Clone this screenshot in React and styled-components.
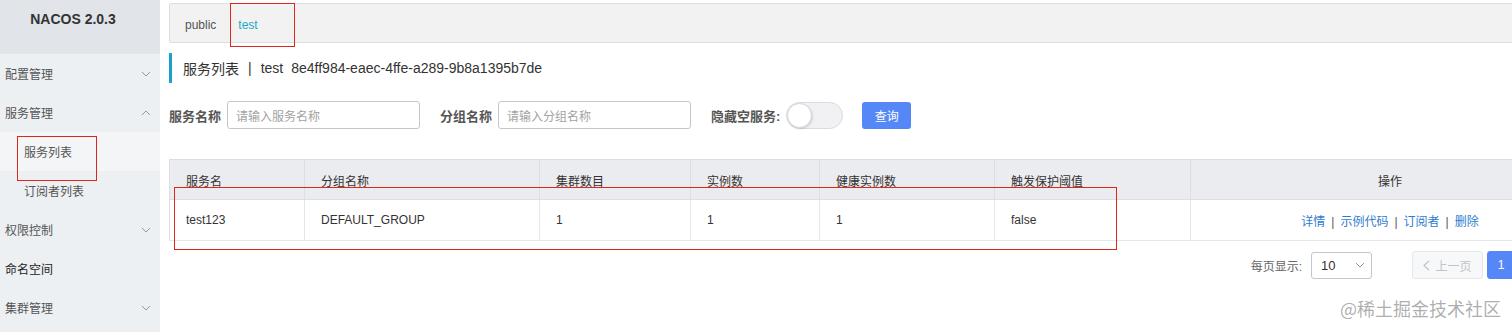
import React from "react";
import styled, { createGlobalStyle } from "styled-components";

const Global = createGlobalStyle`
  html, body { margin: 0; padding: 0; overflow: hidden; background: #fff; }
  body { font-family: "Liberation Sans", "Noto Sans CJK SC", sans-serif; color: #333; }
  * { box-sizing: border-box; }
`;

const Layout = styled.div`
  position: relative;
  display: flex;
  width: 1512px;
  height: 332px;
  overflow: hidden;
`;

const Sidebar = styled.aside`
  flex: 0 0 160px;
  background: #edf0f3;
  display: flex;
  flex-direction: column;
`;

const Brand = styled.div`
  height: 54px;
  background: #e1e4e8;
  font-weight: bold;
  font-size: 14px;
  color: #333;
  padding: 11px 14px 0 0;
  text-align: center;
  line-height: 16px;
`;

const MenuItem = styled.div`
  height: 39px;
  display: flex;
  align-items: center;
  justify-content: space-between;
  padding: 0 9px 0 ${(p) => (p.$sub ? 24 : 5)}px;
  font-size: 12px;
  color: ${(p) => (p.$strong ? "#222" : "#555")};
  background: ${(p) => (p.$active ? "#f3f5f7" : "transparent")};
`;

const Chevron = ({ up }) => (
  <svg width="10" height="6" viewBox="0 0 10 6">
    <polyline
      points={up ? "1,5 5,1 9,5" : "1,1 5,5 9,1"}
      fill="none"
      stroke="#999"
      strokeWidth="1"
    />
  </svg>
);

const Main = styled.main`
  flex: 1;
  min-width: 0;
  padding: 3px 0 0 9px;
  overflow: hidden;
`;

const TabBar = styled.div`
  width: 1421px;
  height: 40px;
  background: #f2f2f2;
  border: 1px solid #dedede;
  border-radius: 2px;
  display: flex;
  align-items: center;
  padding: 3px 0 0 4px;
`;

const Tab = styled.span`
  padding: 0 11px;
  font-size: 12px;
  color: ${(p) => (p.$active ? "#1fa9c6" : "#555")};
`;

const TitleBar = styled.div`
  margin-top: 10px;
  height: 30px;
  display: flex;
  align-items: center;
  border-left: 3px solid #1b9fcb;
  padding-left: 11px;
  font-size: 14px;
  color: #333;
`;

const Sep = styled.span`
  margin: 0 9px;
`;

const Uuid = styled.span`
  margin-left: 8px;
`;

const Form = styled.div`
  margin-top: 18px;
  display: flex;
  align-items: center;
  height: 28px;
`;

const FormItem = styled.div`
  display: flex;
  align-items: center;
  margin-right: ${(p) => p.$gap ?? 20}px;
`;

const Label = styled.label`
  font-size: 13px;
  font-weight: bold;
  color: #555;
  padding-right: 6px;
  white-space: nowrap;
`;

const Input = styled.div`
  width: ${(p) => p.$w}px;
  height: 28px;
  border: 1px solid #c4c6cf;
  border-radius: 3px;
  display: flex;
  align-items: center;
  padding-left: 8px;
  font-size: 12px;
  color: #a3a3a3;
  background: #fff;
`;

const Switch = styled.div`
  position: relative;
  width: 57px;
  height: 27px;
  border-radius: 14px;
  background: #f1f1f3;
  border: 1px solid #d9dbe0;
`;

const Knob = styled.span`
  position: absolute;
  left: 0;
  top: 0;
  width: 25px;
  height: 25px;
  border-radius: 50%;
  background: #fff;
  border: 1px solid #d4d6db;
  box-shadow: 1px 1px 2px rgba(0, 0, 0, 0.12);
`;

const PrimaryButton = styled.button`
  width: 49px;
  height: 27px;
  border: none;
  border-radius: 3px;
  background: #5587f6;
  color: #fff;
  font-size: 12px;
  font-family: inherit;
  padding: 0;
`;

const Table = styled.table`
  margin-top: 30px;
  width: 1421px;
  border-collapse: collapse;
  table-layout: fixed;
  border: 1px solid #dcdee3;
  font-size: 12px;
  color: #333;
`;

const Th = styled.th`
  width: ${(p) => (p.$w ? `${p.$w}px` : "auto")};
  height: 40px;
  background: #ebecf0;
  font-weight: normal;
  text-align: ${(p) => (p.$center ? "center" : "left")};
  padding: 0 16px;
  border-right: 1px solid #dcdee3;
  border-bottom: 1px solid #dcdee3;
  padding-top: 2px;
`;

const Td = styled.td`
  height: 41px;
  text-align: ${(p) => (p.$center ? "center" : "left")};
  padding: 0 16px;
  border-right: 1px solid #e6e7eb;
  border-bottom: 1px solid #e6e7eb;
  white-space: nowrap;
`;

const Link = styled.a`
  color: #2f7ccf;
  text-decoration: none;
`;

const Bar = styled.span`
  margin: 0 6px;
  color: #555;
`;

const Pager = styled.div`
  width: 1421px;
  margin-top: 10px;
  display: flex;
  align-items: center;
  justify-content: flex-end;
  font-size: 12px;
`;

const PagerLabel = styled.span`
  color: #666;
  margin-right: 9px;
`;

const Select = styled.div`
  width: 61px;
  height: 27px;
  border: 1px solid #c4c6cf;
  border-radius: 3px;
  display: flex;
  align-items: center;
  justify-content: space-between;
  padding: 0 6px 0 9px;
  color: #333;
  font-size: 13px;
  margin-right: 40px;
`;

const PageBtn = styled.div`
  height: 28px;
  width: ${(p) => p.$w}px;
  margin-left: ${(p) => p.$ml ?? 4}px;
  border-radius: 3px;
  display: flex;
  align-items: center;
  justify-content: center;
  gap: 5px;
  font-size: 12px;
  ${(p) =>
    p.$current
      ? "background:#5587f6;color:#fff;border:1px solid #5587f6;"
      : "background:#f7f8fa;color:#c1c3ca;border:1px solid #e6e7eb;"}
`;

const Mark = styled.div`
  position: absolute;
  left: ${(p) => p.$x}px;
  top: ${(p) => p.$y}px;
  width: ${(p) => p.$w}px;
  height: ${(p) => p.$h}px;
  border: 1.5px solid #e1251b;
  pointer-events: none;
`;

const Watermark = styled.div`
  position: absolute;
  left: 1340px;
  top: 296px;
  font-family: "Noto Sans CJK SC", sans-serif;
  font-size: 18px;
  line-height: 24px;
  color: rgba(120, 120, 120, 0.6);
  white-space: nowrap;
`;

const menu = [
  { label: "配置管理", chevron: "down" },
  { label: "服务管理", chevron: "up" },
  { label: "服务列表", sub: true, active: true },
  { label: "订阅者列表", sub: true },
  { label: "权限控制", chevron: "down" },
  { label: "命名空间", strong: true },
  { label: "集群管理", chevron: "down" },
];

const cols = [
  { title: "服务名", w: 135, v: "test123" },
  { title: "分组名称", w: 235, v: "DEFAULT_GROUP" },
  { title: "集群数目", w: 151, v: "1" },
  { title: "实例数", w: 129, v: "1" },
  { title: "健康实例数", w: 175, v: "1" },
  { title: "触发保护阈值", w: 196, v: "false" },
];

const SmallArrow = ({ dir = "left", color = "#c1c3ca" }) => (
  <svg width="7" height="11" viewBox="0 0 7 11">
    <polyline
      points={dir === "left" ? "6,1 1,5.5 6,10" : "1,1 6,5.5 1,10"}
      fill="none"
      stroke={color}
      strokeWidth="1.2"
    />
  </svg>
);

export default function App() {
  return (
    <>
      <Global />
      <Layout>
        <Sidebar>
          <Brand>NACOS 2.0.3</Brand>
          {menu.map((m) => (
            <MenuItem key={m.label} $sub={m.sub} $active={m.active} $strong={m.strong}>
              <span>{m.label}</span>
              {m.chevron && <Chevron up={m.chevron === "up"} />}
            </MenuItem>
          ))}
        </Sidebar>
        <Main>
          <TabBar>
            <Tab>public</Tab>
            <Tab $active>test</Tab>
          </TabBar>
          <TitleBar>
            <span>服务列表</span>
            <Sep>|</Sep>
            <span>test</span>
            <Uuid>8e4ff984-eaec-4ffe-a289-9b8a1395b7de</Uuid>
          </TitleBar>
          <Form>
            <FormItem>
              <Label>服务名称</Label>
              <Input $w={193}>请输入服务名称</Input>
            </FormItem>
            <FormItem>
              <Label>分组名称</Label>
              <Input $w={193}>请输入分组名称</Input>
            </FormItem>
            <FormItem $gap={19}>
              <Label>隐藏空服务:</Label>
              <Switch>
                <Knob />
              </Switch>
            </FormItem>
            <PrimaryButton>查询</PrimaryButton>
          </Form>
          <Table>
            <thead>
              <tr>
                {cols.map((c) => (
                  <Th key={c.title} $w={c.w}>
                    {c.title}
                  </Th>
                ))}
                <Th $center>操作</Th>
              </tr>
            </thead>
            <tbody>
              <tr>
                {cols.map((c) => (
                  <Td key={c.title}>{c.v}</Td>
                ))}
                <Td $center>
                  <Link>详情</Link>
                  <Bar>|</Bar>
                  <Link>示例代码</Link>
                  <Bar>|</Bar>
                  <Link>订阅者</Link>
                  <Bar>|</Bar>
                  <Link>删除</Link>
                </Td>
              </tr>
            </tbody>
          </Table>
          <Pager>
            <PagerLabel>每页显示:</PagerLabel>
            <Select>
              <span>10</span>
              <Chevron />
            </Select>
            <PageBtn $w={71} $ml={0}>
              <SmallArrow dir="left" />
              <span>上一页</span>
            </PageBtn>
            <PageBtn $w={28} $current>
              1
            </PageBtn>
            <PageBtn $w={71}>
              <span>下一页</span>
              <SmallArrow dir="right" />
            </PageBtn>
          </Pager>
        </Main>
        <Mark $x={230} $y={3} $w={65} $h={44} />
        <Mark $x={17} $y={136} $w={80} $h={45} />
        <Mark $x={174} $y={187} $w={943} $h={63} />
        <Watermark>@稀土掘金技术社区</Watermark>
      </Layout>
    </>
  );
}
